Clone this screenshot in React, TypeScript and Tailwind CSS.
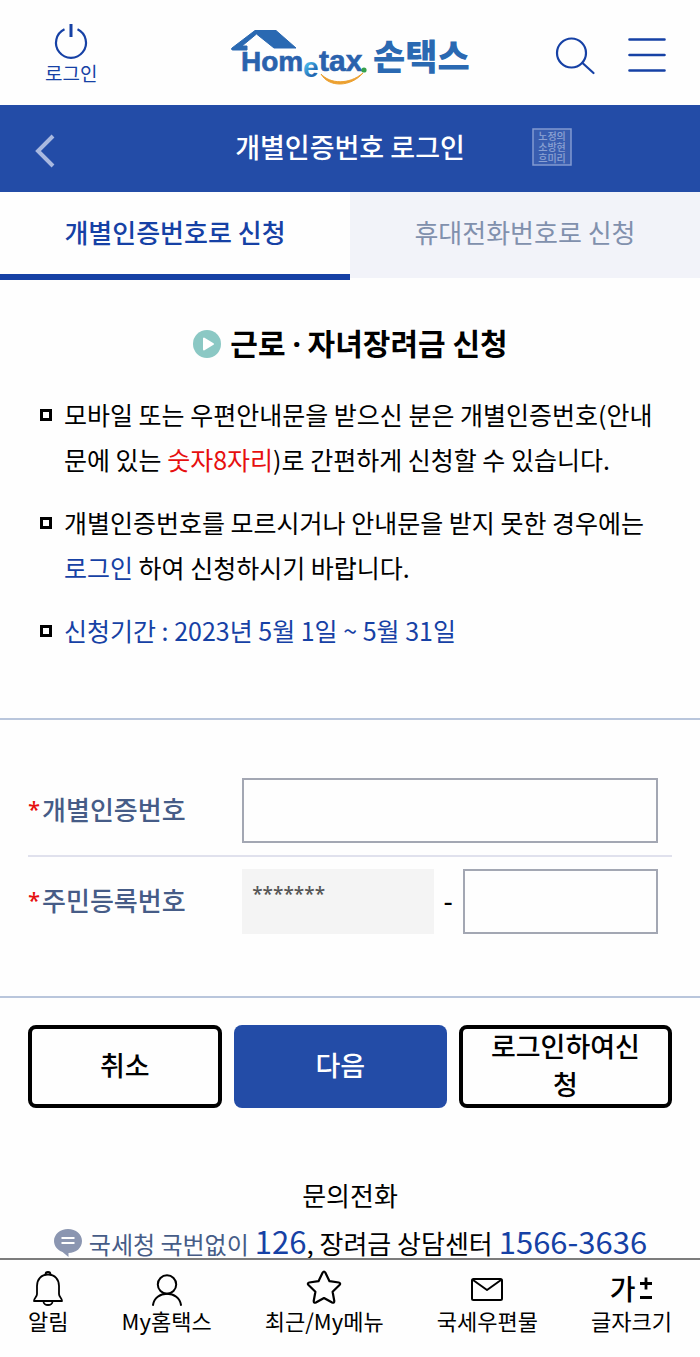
import React, { useState } from 'react';

type TabId = 'code' | 'phone';

const tabs: { id: TabId; label: string }[] = [
  { id: 'code', label: '개별인증번호로 신청' },
  { id: 'phone', label: '휴대전화번호로 신청' },
];

const HometaxLogo: React.FC = () => (
  <svg viewBox="0 0 240 60" className="w-[240px] h-[60px]" role="img" aria-label="Hometax 손택스">
    <defs>
      <linearGradient id="logoE" x1="0" y1="0" x2="0.6" y2="1">
        <stop offset="0.4" stopColor="#45b4e6" />
        <stop offset="0.8" stopColor="#2368b2" />
      </linearGradient>
    </defs>
    <path d="M25 5.500h21L66 23H44L26.500 9 12 21h5v4H3c-1.500 0-2-1-1-2z" fill="#2a69b2" stroke="#2a69b2" strokeWidth="1" strokeLinejoin="round" />
    <g fontFamily="'Liberation Sans', sans-serif" fontWeight="700" fill="#2a62ad" stroke="#2a62ad" strokeWidth="0.600">
      <text x="11" y="46" fontSize="28">Hom</text>
      <text x="73" y="52" fontSize="28" fill="url(#logoE)" stroke="none">e</text>
      <text x="89" y="46" fontSize="30">tax</text>
    </g>
    <path d="M91 49c9 10 28 11 42-1-12 14-34 15-42 1z" fill="#eca02f" stroke="#eca02f" strokeWidth="1" />
    <circle cx="134" cy="45" r="2.600" fill="#35a04a" />
    <text x="143" y="45" fontSize="35" fontWeight="900" fontFamily="'Noto Sans CJK KR', sans-serif" fill="#2a69b2">손택스</text>
  </svg>
);

const SealMark: React.FC = () => (
  <svg viewBox="0 0 42 40" className="w-[42px] h-10" aria-hidden="true">
    <g opacity="0.5">
      <rect x="2" y="2" width="38" height="36" fill="#ffffff" fillOpacity="0.2" stroke="#dfe7fa" strokeWidth="1.500" />
      <g fontFamily="'Noto Sans CJK KR', sans-serif" fontSize="10" fontWeight="500" fill="#f2f6ff" textAnchor="middle">
        <text x="21" y="12.500">노정의</text>
        <text x="21" y="23.500">소방현</text>
        <text x="21" y="34.500">흐미리</text>
      </g>
    </g>
  </svg>
);

const Bullet: React.FC<{ children: React.ReactNode }> = ({ children }) => (
  <li className="flex gap-3">
    <span className="mt-[17px] size-3 shrink-0 border-3 border-black" />
    <span className="break-all">{children}</span>
  </li>
);

const Required: React.FC = () => (
  <span className="font-['Noto_Sans',sans-serif] text-[22px] text-[#e60f0f]">*</span>
);

const iconProps = {
  fill: 'none',
  stroke: 'currentColor',
  strokeWidth: 2,
  strokeLinecap: 'round' as const,
  strokeLinejoin: 'round' as const,
};

const navItems = [
  {
    label: '알림',
    icon: (
      <svg viewBox="0 0 36 36" className="size-9" {...iconProps} strokeWidth={1.8}>
        <path d="M18 4.500C11 4.500 7 9.500 7 16v8c0 3-3 4-3 7h28c0-3-3-4-3-7v-8c0-6.500-4-11.500-11-11.500z" />
        <path d="M15.500 4.500a2.500 2.500 0 0 1 5 0M13.500 31.500a4.500 3.500 0 0 0 9 0" />
      </svg>
    ),
  },
  {
    label: 'My홈택스',
    icon: (
      <svg viewBox="0 0 36 36" className="size-9" {...iconProps}>
        <circle cx="18" cy="14.500" r="9.200" />
        <path d="M4 35c1-7 7-11.300 14-11.300S31 28 32 35" />
      </svg>
    ),
  },
  {
    label: '최근/My메뉴',
    icon: (
      <svg viewBox="0 0 36 36" className="size-9" {...iconProps} strokeWidth={2.2}>
        <path d="M16.700 2.500q1.300-2 2.600 0l4.200 8.700 9.300 1.300q2.300.6.700 2.500l-6.900 6.700 1.700 9.300q0 2.300-2.200 1.500L18 28l-8.100 4.500q-2.200.8-2.200-1.500l1.700-9.300L2.500 15q-1.600-1.900.7-2.500l9.300-1.300z" />
      </svg>
    ),
  },
  {
    label: '국세우편물',
    icon: (
      <svg viewBox="0 0 36 36" className="size-9" {...iconProps}>
        <rect x="3" y="9" width="30" height="21" rx="1.500" />
        <path d="M4 10l14 10 14-10" />
      </svg>
    ),
  },
  {
    label: '글자크기',
    icon: (
      <span className="flex h-9 items-center gap-1 text-[28px] leading-9 font-medium">
        가
        <svg viewBox="0 0 14 24" className="w-3.5 h-6" fill="none" stroke="currentColor" strokeWidth="2.800">
          <path d="M7 1.500v12M1 7.500h12M1 21.500h12" />
        </svg>
      </span>
    ),
  },
];

export default function App() {
  const [tab, setTab] = useState<TabId>('code');
  const [code, setCode] = useState('');
  const [residentNo, setResidentNo] = useState('');

  return (
    <div className="bg-[#fefefe] pb-[90px] font-['Noto_Sans_CJK_KR',sans-serif] text-black">
      {/* Header */}
      <header className="grid h-[105px] grid-cols-[1fr_auto_1fr] items-center">
        <a href="#login" className="flex flex-col items-center justify-self-start pt-0.5 pl-[45px] text-[19px] leading-6 text-[#1641a5]">
          <svg viewBox="0 0 36 38" className="h-[38px] w-9" fill="none" stroke="currentColor">
            <path d="M11.500 6.300a15 15 0 1 0 13 0" strokeWidth="2.200" />
            <path d="M18 1v13" strokeWidth="3" />
          </svg>
          로그인
        </a>
        <a href="#home" className="pt-1">
          <HometaxLogo />
        </a>
        <div className="flex items-center gap-8 justify-self-end pt-1 pr-[34px] text-[#1641a5]">
          <button type="button" aria-label="검색">
            <svg viewBox="0 0 42 42" className="size-[42px]" fill="none" stroke="currentColor" strokeWidth="2.200" strokeLinecap="round">
              <circle cx="17.500" cy="19" r="14.500" />
              <path d="M28.500 29L39.500 39" />
            </svg>
          </button>
          <button type="button" aria-label="전체메뉴">
            <svg viewBox="0 0 38 36" className="h-9 w-[38px]" fill="none" stroke="currentColor" strokeWidth="2.600" strokeLinecap="round">
              <path d="M1.500 2.500h35M1.500 18h35M1.500 33.500h35" />
            </svg>
          </button>
        </div>
      </header>

      {/* Title bar */}
      <div className="grid h-[87px] grid-cols-[1fr_auto_1fr] items-center bg-[#234ca7] text-white">
        <button type="button" aria-label="이전" className="justify-self-start pt-1 pl-[34px]">
          <svg viewBox="0 0 22 34" className="h-[34px] w-[22px]" fill="none" stroke="#a9b9e0" strokeWidth="4">
            <path d="M19 2L4 17l15 15" />
          </svg>
        </button>
        <h1 className="pb-1 text-[27px] leading-10 font-medium">개별인증번호 로그인</h1>
        <div className="pb-1 pl-[66px]">
          <SealMark />
        </div>
      </div>

      {/* Tabs */}
      <div className="grid h-[88px] grid-cols-2 items-start" role="tablist">
        {tabs.map((t) => (
          <button
            key={t.id}
            type="button"
            role="tab"
            aria-selected={tab === t.id}
            onClick={() => setTab(t.id)}
            className={`text-[26px] ${
              tab === t.id
                ? 'h-[88px] border-b-6 border-[#1641a5] pb-1 font-medium text-[#1641a5]'
                : 'h-[86px] bg-[#f2f3f9] pb-2 text-[#8190ad]'
            }`}
          >
            {t.label}
          </button>
        ))}
      </div>

      <main>
        <section className="px-7 pt-[38px]">
          <h2 className="flex items-center justify-center gap-2 text-[30px] leading-12 font-bold">
            <svg viewBox="0 0 30 30" className="size-[30px]" aria-hidden="true">
              <circle cx="15" cy="16" r="14" fill="#8bc8c4" />
              <path d="M12 10.500v11l9-5.500z" fill="#ffffff" stroke="#ffffff" strokeWidth="2" strokeLinejoin="round" />
            </svg>
            <span>
              근로 <span className="font-['Noto_Sans',sans-serif]">·</span> 자녀장려금 신청
            </span>
          </h2>
          <ul className="mt-6 space-y-[18px] pl-3 text-[25px] leading-[45px]">
            <Bullet>
              모바일 또는 우편안내문을 받으신 분은 개별인증번호(안내문에 있는{' '}
              <span className="text-[#e60f0f]">숫자8자리</span>)로 간편하게 신청할 수 있습니다.
            </Bullet>
            <Bullet>
              개별인증번호를 모르시거나 안내문을 받지 못한 경우에는{' '}
              <a href="#login" className="text-[#1641a5]">로그인</a> 하여 신청하시기 바랍니다.
            </Bullet>
            <Bullet>
              <span className="text-[#1641a5]">신청기간 : 2023년 5월 1일 ~ 5월 31일</span>
            </Bullet>
          </ul>
        </section>

        <form onSubmit={(e) => e.preventDefault()}>
          <div className="mt-[65px] border-y-2 border-[#b9c6dc] px-7 pt-[58px] pb-[62px]">
            <div className="flex items-center border-b-2 border-[#e0e1ed] pr-3.5 pb-3">
              <label htmlFor="code" className="flex w-[34%] items-center gap-0.5 pb-1 text-[26px] font-medium text-[#465c87]">
                <Required />
                개별인증번호
              </label>
              <input
                id="code"
                type="text"
                value={code}
                onChange={(e) => setCode(e.target.value)}
                className="h-[65px] min-w-0 flex-1 border-2 border-[#a3a7b3] px-2.5 text-[22px] outline-none"
              />
            </div>
            <div className="flex items-center pt-3 pr-3.5">
              <label htmlFor="resident" className="flex w-[34%] items-center gap-0.5 pb-1 text-[26px] font-medium text-[#465c87]">
                <Required />
                주민등록번호
              </label>
              <input
                type="text"
                value="*******"
                readOnly
                aria-label="주민등록번호 뒷자리"
                className="h-[65px] min-w-0 flex-1 bg-[#f4f4f4] px-2.5 pb-4 font-['Noto_Sans',sans-serif] text-[19px] font-medium text-[#555555] outline-none"
              />
              <span className="w-[29px] pb-1 text-center text-[26px] font-medium">-</span>
              <input
                id="resident"
                type="text"
                value={residentNo}
                onChange={(e) => setResidentNo(e.target.value)}
                className="h-[65px] min-w-0 flex-1 border-2 border-[#a3a7b3] px-2.5 text-[22px] outline-none"
              />
            </div>
          </div>

          <div className="grid grid-cols-[10fr_11fr_11fr] gap-3 px-7 pt-[27px] text-[27px] leading-[38px] font-medium">
            <button type="button" className="h-[83px] rounded-lg border-4 border-black pb-1">취소</button>
            <button type="submit" className="h-[83px] rounded-lg bg-[#234ca7] pb-1 text-white">다음</button>
            <button type="button" className="flex h-[83px] items-center rounded-lg border-4 border-black px-5 pb-1 break-all">로그인하여신청</button>
          </div>
        </form>

        <section className="pt-16 text-center text-[26px] leading-[46px]">
          <h3>문의전화</h3>
          <p className="flex items-baseline justify-center gap-1.5 whitespace-nowrap">
            <svg viewBox="0 0 30 30" className="size-[30px] self-center" aria-hidden="true">
              <path d="M15 1C7 1 1 6.500 1 13c0 5 3.500 9 8.500 11l6 5v-4C23 25 29 20 29 13S23 1 15 1z" fill="#8b96b1" />
              <path d="M8.500 10h13M8.500 15h13" stroke="#ffffff" strokeWidth="2" />
            </svg>
            <span className="text-2xl leading-[46px] text-[#465c87]">국세청 국번없이</span>
            <span>
              <a href="tel:126" className="text-[31px] text-[#1641a5]">126</a>, 장려금 상담센터
            </span>
            <a href="tel:1566-3636" className="text-[31px] text-[#1641a5]">1566-3636</a>
          </p>
        </section>
      </main>

      {/* Bottom navigation */}
      <nav className="fixed inset-x-0 bottom-0 flex h-[99px] items-start justify-between border-t-2 border-[#7c7c7c] bg-[#fefefe] px-7 pt-2.5">
        {navItems.map((item) => (
          <a key={item.label} href={`#${item.label}`} className="flex flex-col items-center text-[22px] leading-7">
            {item.icon}
            {item.label}
          </a>
        ))}
      </nav>
    </div>
  );
}
